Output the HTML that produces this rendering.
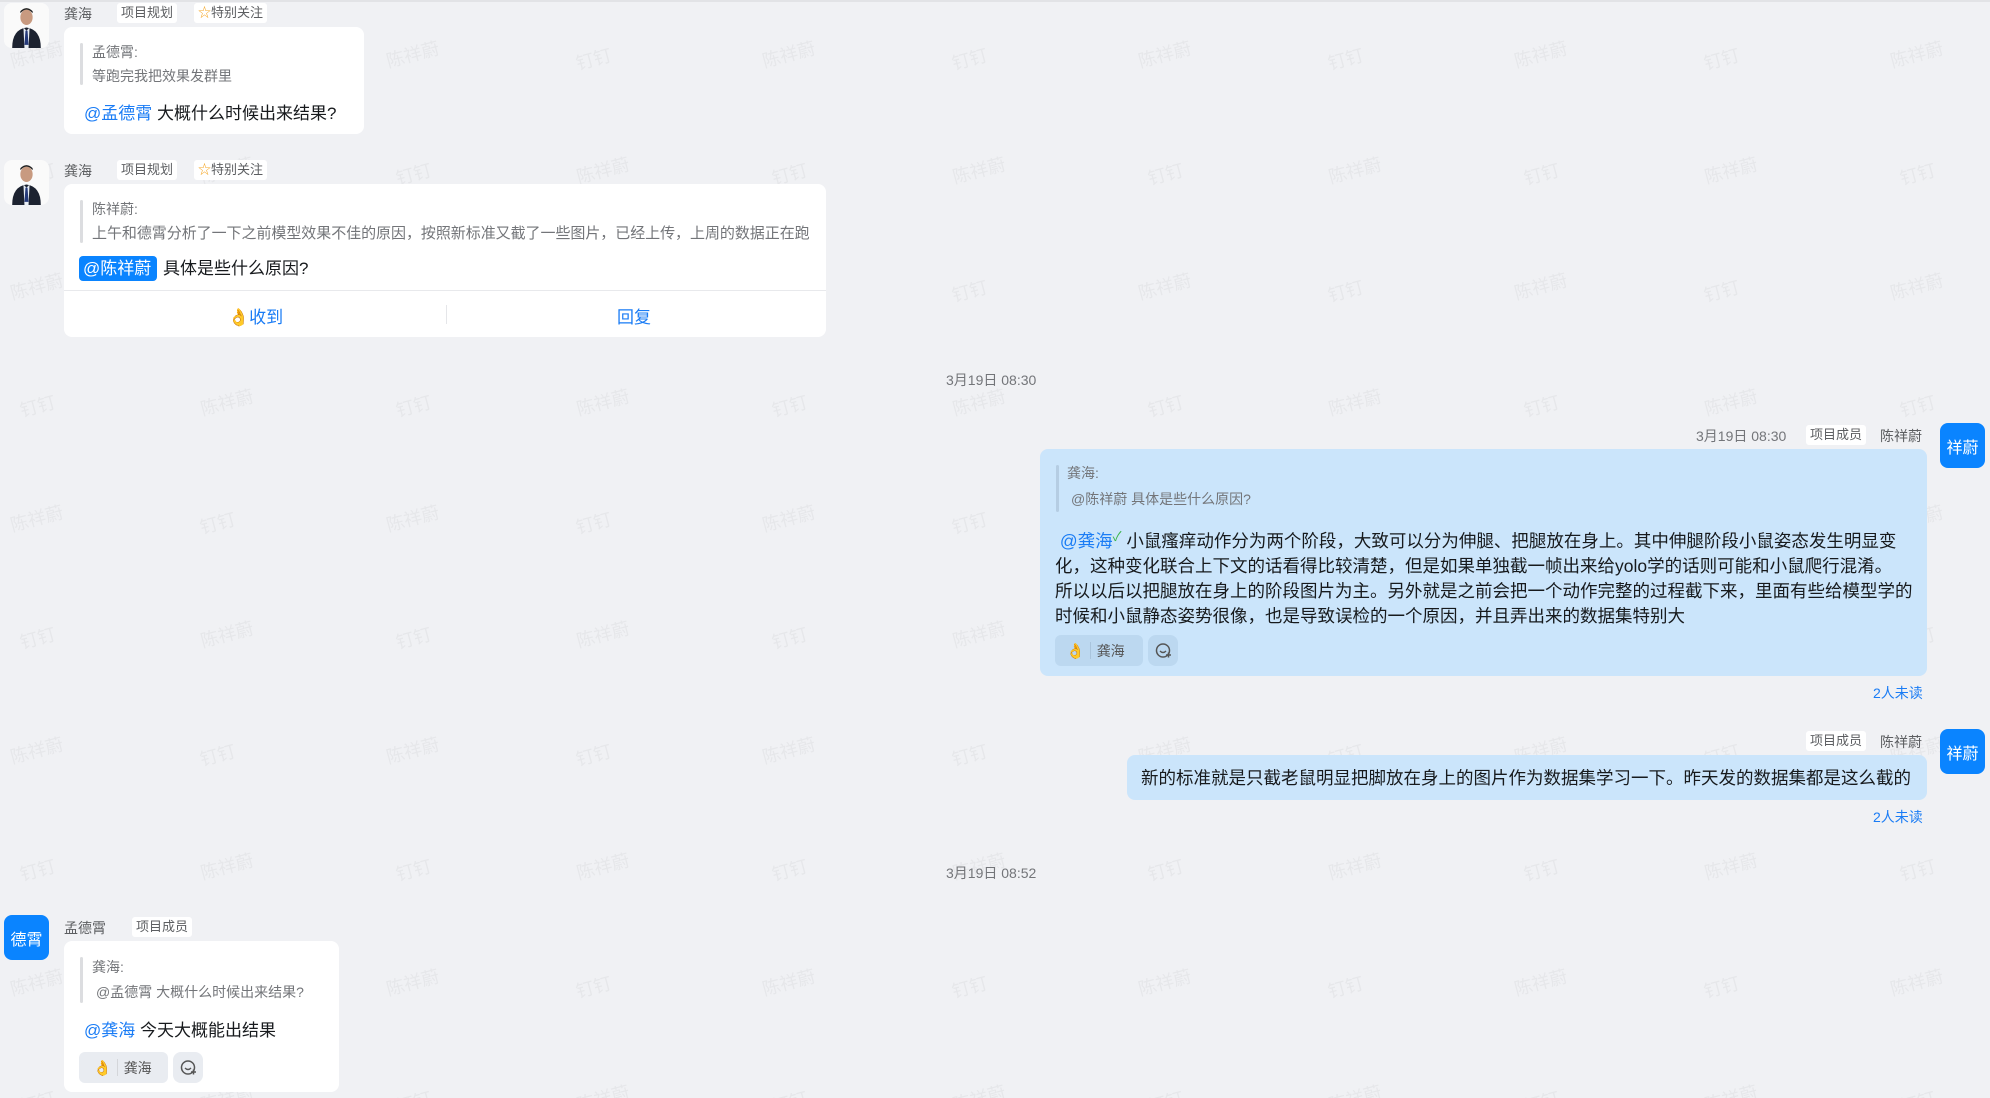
<!DOCTYPE html>
<html><head><meta charset="utf-8"><style>
*{margin:0;padding:0;box-sizing:border-box}
body{width:1990px;height:1098px;background:#f0f1f4;font-family:"Liberation Sans","Noto Sans CJK SC",sans-serif;position:relative;overflow:hidden;color:#171a1d}
.a{position:absolute;white-space:nowrap}
.wm{position:absolute;left:0;top:0}
.av{position:absolute;width:45px;height:45px;border-radius:8px}
.blue{background:#0a84ff;color:#fff;font-size:16px;display:flex;align-items:center;justify-content:center}
.name{font-size:14px;color:#5c5e61}
.tag{font-size:13px;color:#5c5e61;background:#fff;border-radius:3px;padding:1px 4px;line-height:18px}
.bub{position:absolute;background:#fff;border-radius:8px}
.qbar{position:absolute;width:3px;background:#dcdde0;border-radius:2px}
.q{font-size:14px;color:#737579}
.at{color:#1a7cf5}
.react{position:absolute;background:#e9ecf1;border-radius:6px;height:31px;font-size:14px;color:#555;display:flex;align-items:center}
.rbtn{position:absolute;background:#e9ecf1;border-radius:8px;width:30px;height:31px}
.unread{font-size:14px;color:#1a7cf5}
.date{font-size:14px;color:#737579}
</style></head><body>
<svg class="wm" width="1990" height="1098"><defs>
<pattern id="p" width="376" height="232" patternUnits="userSpaceOnUse" x="0" y="0">
<g font-family="Noto Sans CJK SC,sans-serif" font-size="18" fill="#e6e7ea">
<text x="10" y="60" transform="rotate(-15 40 55)">陈祥蔚</text>
<text x="200" y="65" transform="rotate(-15 220 60)">钉钉</text>
<text x="200" y="176" transform="rotate(-15 230 170)">陈祥蔚</text>
<text x="20" y="180" transform="rotate(-15 40 175)">钉钉</text>
</g></pattern></defs>
<rect x="0" y="0" width="1990" height="1098" fill="url(#p)"/>
<rect x="0" y="0" width="1990" height="2" fill="#e2e3e6"/>
</svg>

<!-- msg1 -->
<svg class="av" style="left:4px;top:3px;background:#fff" viewBox="0 0 44 44"><rect width="44" height="44" rx="7" fill="#fafafa"/><ellipse cx="22" cy="14" rx="6" ry="7.5" fill="#c89a80"/><path d="M16 10q6-7 12 0v-2q-6-6-12 0z" fill="#222"/><path d="M8 44q0-18 14-20q14 2 14 20z" fill="#1c2230"/><path d="M19 24l3 3 3-3 -1 20h-4z" fill="#e8eef5"/><path d="M21 27h2l1 14h-4z" fill="#253a7a"/></svg>
<div class="a name" style="left:64px;top:4px">龚海</div>
<div class="a tag" style="left:117px;top:3px">项目规划</div>
<div class="a tag" style="left:194px;top:3px"><span style="color:#f5a623">☆</span>特别关注</div>
<div class="bub" style="left:64px;top:27px;width:300px;height:107px"></div>
<div class="qbar" style="left:80px;top:43px;height:42px"></div>
<div class="a q" style="left:92px;top:42px">孟德霄:</div>
<div class="a q" style="left:92px;top:66px">等跑完我把效果发群里</div>
<div class="a" style="left:84px;top:99px;font-size:17px"><span class="at">@孟德霄</span> 大概什么时候出来结果?</div>

<!-- msg2 -->
<svg class="av" style="left:4px;top:160px" viewBox="0 0 44 44"><rect width="44" height="44" rx="7" fill="#fafafa"/><ellipse cx="22" cy="14" rx="6" ry="7.5" fill="#c89a80"/><path d="M16 10q6-7 12 0v-2q-6-6-12 0z" fill="#222"/><path d="M8 44q0-18 14-20q14 2 14 20z" fill="#1c2230"/><path d="M19 24l3 3 3-3 -1 20h-4z" fill="#e8eef5"/><path d="M21 27h2l1 14h-4z" fill="#253a7a"/></svg>
<div class="a name" style="left:64px;top:161px">龚海</div>
<div class="a tag" style="left:117px;top:160px">项目规划</div>
<div class="a tag" style="left:194px;top:160px"><span style="color:#f5a623">☆</span>特别关注</div>
<div class="bub" style="left:64px;top:184px;width:762px;height:153px"></div>
<div class="qbar" style="left:80px;top:200px;height:43px"></div>
<div class="a q" style="left:92px;top:199px">陈祥蔚:</div>
<div class="a q" style="left:92px;top:222px;font-size:15px;letter-spacing:-0.05px">上午和德霄分析了一下之前模型效果不佳的原因，按照新标准又截了一些图片，已经上传，上周的数据正在跑</div>
<div class="a" style="left:79px;top:256px;height:25px;width:78px;background:#0a84ff;border-radius:4px;color:#fff;font-size:17px;line-height:25px;padding-left:4px">@陈祥蔚</div>
<div class="a" style="left:163px;top:256px;font-size:17px;line-height:25px">具体是些什么原因?</div>
<div class="a" style="left:64px;top:290px;width:762px;height:1px;background:#e8e9ec"></div>
<div class="a" style="left:446px;top:305px;width:1px;height:19px;background:#e5e6e9"></div>
<div class="a" style="left:228px;top:303px;font-size:17px;color:#1a7cf5"><span style="color:#eccaa5">👌</span>收到</div>
<div class="a" style="left:617px;top:303px;font-size:17px;color:#1a7cf5">回复</div>

<div class="a date" style="left:946px;top:370px">3月19日 08:30</div>

<!-- msg3 right -->
<div class="av blue" style="left:1940px;top:423px">祥蔚</div>
<div class="a date" style="left:1696px;top:426px">3月19日 08:30</div>
<div class="a tag" style="left:1806px;top:425px">项目成员</div>
<div class="a name" style="left:1880px;top:426px">陈祥蔚</div>
<div class="bub" style="left:1040px;top:449px;width:887px;height:227px;background:#cbe5fb"></div>
<div class="qbar" style="left:1056px;top:465px;height:47px;background:#b5cde3"></div>
<div class="a q" style="left:1067px;top:463px">龚海:</div>
<div class="a q" style="left:1071px;top:489px">@陈祥蔚 具体是些什么原因?</div>
<div class="a" style="left:1055px;top:524px;font-size:17.5px;line-height:25px"><span class="at">&nbsp;@龚海</span><span style="color:#3bb54a;font-size:13px;vertical-align:6px">✓</span> 小鼠瘙痒动作分为两个阶段，大致可以分为伸腿、把腿放在身上。其中伸腿阶段小鼠姿态发生明显变<br>化，这种变化联合上下文的话看得比较清楚，但是如果单独截一帧出来给yolo学的话则可能和小鼠爬行混淆。<br>所以以后以把腿放在身上的阶段图片为主。另外就是之前会把一个动作完整的过程截下来，里面有些给模型学的<br>时候和小鼠静态姿势很像，也是导致误检的一个原因，并且弄出来的数据集特别大</div>
<div class="react" style="left:1055px;top:635px;width:88px;background:#bcd8f0"><span style="margin-left:11px;color:#eccaa5;font-size:15px">👌</span><span style="width:1px;height:17px;background:#a9c4dc;margin:0 6px 0 5px"></span>龚海</div>
<div class="rbtn" style="left:1148px;top:635px;background:#bcd8f0"><svg width="30" height="31" viewBox="0 0 30 31"><circle cx="15" cy="15.5" r="6.5" fill="none" stroke="#555" stroke-width="1.5"/><path d="M12 16q3 3 6 0" fill="none" stroke="#555" stroke-width="1.4"/><path d="M18 20h5M20.5 17.5v5" stroke="#555" stroke-width="1.5"/></svg></div>
<div class="a unread" style="left:1873px;top:683px">2人未读</div>

<!-- msg4 right -->
<div class="av blue" style="left:1940px;top:729px">祥蔚</div>
<div class="a tag" style="left:1806px;top:731px">项目成员</div>
<div class="a name" style="left:1880px;top:732px">陈祥蔚</div>
<div class="bub" style="left:1127px;top:755px;width:800px;height:45px;background:#cbe5fb"></div>
<div class="a" style="left:1141px;top:766px;font-size:17.5px;line-height:25px">新的标准就是只截老鼠明显把脚放在身上的图片作为数据集学习一下。昨天发的数据集都是这么截的</div>
<div class="a unread" style="left:1873px;top:807px">2人未读</div>

<div class="a date" style="left:946px;top:863px">3月19日 08:52</div>

<!-- msg5 -->
<div class="av blue" style="left:4px;top:915px">德霄</div>
<div class="a name" style="left:64px;top:918px">孟德霄</div>
<div class="a tag" style="left:132px;top:917px">项目成员</div>
<div class="bub" style="left:64px;top:941px;width:275px;height:151px"></div>
<div class="qbar" style="left:80px;top:957px;height:46px"></div>
<div class="a q" style="left:92px;top:957px">龚海:</div>
<div class="a q" style="left:96px;top:982px">@孟德霄 大概什么时候出来结果?</div>
<div class="a" style="left:84px;top:1018px;font-size:17px;line-height:25px"><span class="at">@龚海</span> 今天大概能出结果</div>
<div class="react" style="left:79px;top:1052px;width:89px"><span style="margin-left:14px;color:#eccaa5;font-size:15px">👌</span><span style="width:1px;height:17px;background:#d4d6da;margin:0 6px 0 5px"></span>龚海</div>
<div class="rbtn" style="left:173px;top:1052px"><svg width="30" height="31" viewBox="0 0 30 31"><circle cx="15" cy="15.5" r="6.5" fill="none" stroke="#555" stroke-width="1.5"/><path d="M12 16q3 3 6 0" fill="none" stroke="#555" stroke-width="1.4"/><path d="M18 20h5M20.5 17.5v5" stroke="#555" stroke-width="1.5"/></svg></div>
</body></html>
